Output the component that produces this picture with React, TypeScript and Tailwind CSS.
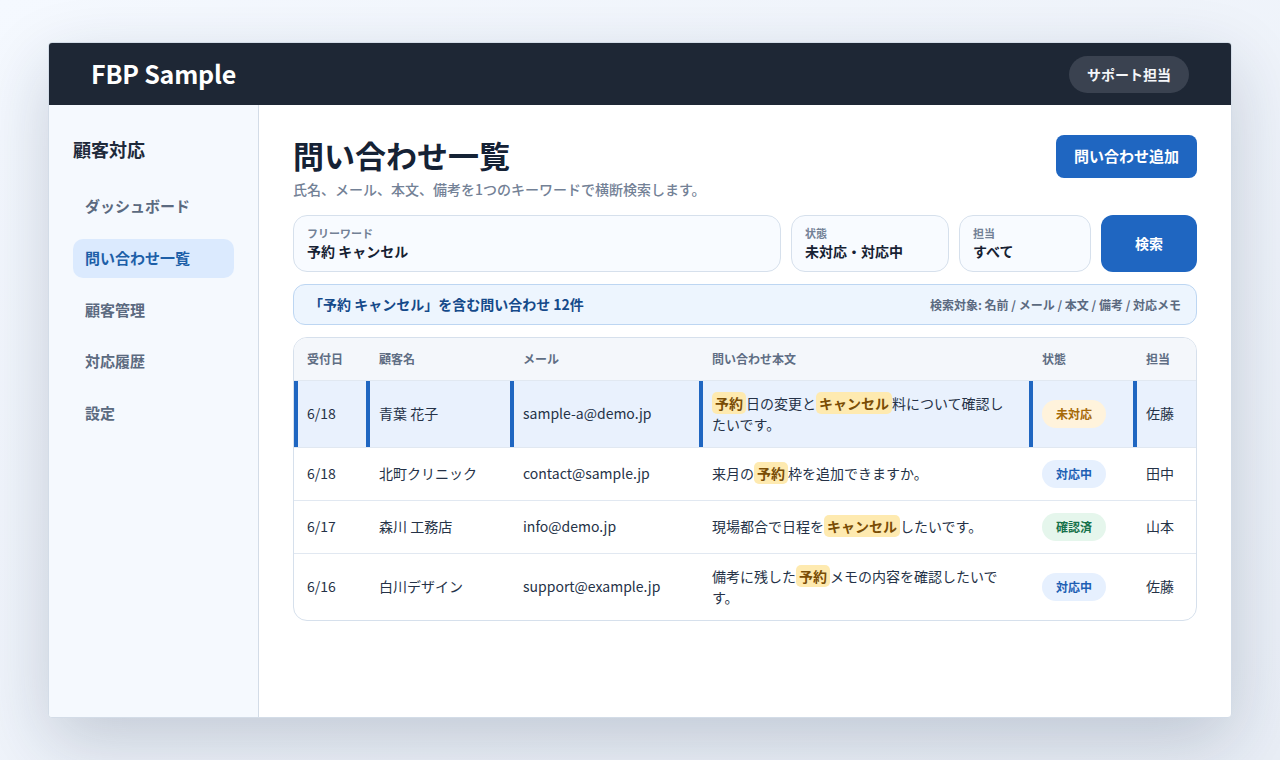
const rows = [
  {
    date: '6/18',
    name: '青葉 花子',
    mail: 'sample-a@demo.jp',
    body: [['予約'], '日の変更と', ['キャンセル'], '料について確認したいです。'],
    status: '未対応',
    owner: '佐藤',
    selected: true,
  },
  {
    date: '6/18',
    name: '北町クリニック',
    mail: 'contact@sample.jp',
    body: ['来月の', ['予約'], '枠を追加できますか。'],
    status: '対応中',
    owner: '田中',
  },
  {
    date: '6/17',
    name: '森川 工務店',
    mail: 'info@demo.jp',
    body: ['現場都合で日程を', ['キャンセル'], 'したいです。'],
    status: '確認済',
    owner: '山本',
  },
  {
    date: '6/16',
    name: '白川デザイン',
    mail: 'support@example.jp',
    body: ['備考に残した', ['予約'], 'メモの内容を確認したいです。'],
    status: '対応中',
    owner: '佐藤',
  },
];

const statusStyles: Record<string, string> = {
  未対応: 'bg-[#fff3dc] text-[#a76a08]',
  対応中: 'bg-[#e6f0fe] text-[#1d5fb4]',
  確認済: 'bg-[#e5f6ec] text-[#16714a]',
};

const navItems = ['ダッシュボード', '問い合わせ一覧', '顧客管理', '対応履歴', '設定'];

const Field = ({ label, value, className }: { label: string; value: string; className: string }) => (
  <div className={`h-[57px] rounded-[14px] border border-[#d6e0ec] bg-[#f8fbff] px-[13px] pt-[9px] ${className}`}>
    <div className="text-[11px] font-bold leading-[16px] text-[#738196]">{label}</div>
    <div className="text-[14px] font-bold leading-[20px] text-[#172233]">{value}</div>
  </div>
);

const Cell = ({ selected, children }: { selected?: boolean; children: React.ReactNode }) => (
  <td className={`px-[13px] py-[12px] align-middle text-[14px] leading-[21px] text-[#253247] ${selected ? 'shadow-[inset_4px_0_0_#1f66c1]' : ''}`}>
    {children}
  </td>
);

export default function App() {
  return (
    <div className="h-[760px] w-[1280px] overflow-hidden bg-gradient-to-br from-[#f5f9ff] to-[#e9eef6] px-[48px] pt-[42px] font-['Noto_Sans_CJK_JP','Noto_Sans',sans-serif]">
      <div className="flex h-[676px] flex-col overflow-hidden rounded-[4px] border border-[#d3dce7] bg-white shadow-[0_24px_70px_rgba(20,40,70,0.2)]">
        <header className="flex h-[62px] shrink-0 items-center justify-between bg-[#1e2735] px-[42px]">
          <div className="text-[25px] font-bold tracking-[-0.2px] text-white">FBP Sample</div>
          <div className="flex h-[37px] items-center rounded-full bg-[#3a4250] px-[18px] text-[14px] font-bold text-[#f4f6f9]">サポート担当</div>
        </header>
        <div className="flex min-h-0 flex-1">
          <aside className="w-[210px] shrink-0 border-r border-[#d3dce7] bg-[#f5f9fe] px-[24px] pt-[31px]">
            <div className="text-[18px] font-bold leading-[26px] text-[#1e2a3b]">顧客対応</div>
            <nav className="mt-[25px] flex flex-col gap-[13px]">
              {navItems.map(item => (
                <div
                  key={item}
                  className={`flex h-[38.75px] items-center rounded-[10px] px-[12px] text-[15px] font-bold ${item === '問い合わせ一覧' ? 'bg-[#dbeafe] text-[#1d5fa8]' : 'text-[#5b6a80]'}`}
                >
                  {item}
                </div>
              ))}
            </nav>
          </aside>
          <main className="flex-1 px-[34px] pt-[30px]">
            <div className="flex items-start justify-between">
              <div>
                <h1 className="text-[31px] font-bold leading-[40px] text-[#152235]">問い合わせ一覧</h1>
                <p className="mt-[4px] text-[14px] font-medium leading-[20px] text-[#738196]">氏名、メール、本文、備考を1つのキーワードで横断検索します。</p>
              </div>
              <button className="h-[43px] w-[141px] rounded-[8px] bg-[#1f66c1] text-[15px] font-bold text-white">問い合わせ追加</button>
            </div>
            <div className="mt-[16px] flex gap-[10px]">
              <Field label="フリーワード" value="予約 キャンセル" className="flex-1" />
              <Field label="状態" value="未対応・対応中" className="w-[158px]" />
              <Field label="担当" value="すべて" className="w-[132px]" />
              <button className="h-[57px] w-[96px] rounded-[12px] bg-[#1f66c1] text-[14px] font-bold text-white">検索</button>
            </div>
            <div className="mt-[12px] flex h-[41px] items-center justify-between rounded-[12px] border border-[#bdd6f2] bg-[#edf5fe] pl-[15px] pr-[15px]">
              <div className="text-[14px] font-bold text-[#154a8a]">「予約 キャンセル」を含む問い合わせ 12件</div>
              <div className="text-[12px] font-bold text-[#5b6a80]">検索対象: 名前 / メール / 本文 / 備考 / 対応メモ</div>
            </div>
            <div className="mt-[12px] overflow-hidden rounded-[14px] border border-[#d6e0ec]">
              <table className="w-full table-fixed border-collapse">
                <colgroup>
                  <col className="w-[72px]" />
                  <col className="w-[144px]" />
                  <col className="w-[189px]" />
                  <col className="w-[330px]" />
                  <col className="w-[104px]" />
                  <col className="w-[63px]" />
                </colgroup>
                <thead>
                  <tr className="h-[42px] border-b border-[#e1e8f1] bg-[#f4f7fb] text-left text-[12px] font-bold text-[#5f6e84]">
                    {['受付日', '顧客名', 'メール', '問い合わせ本文', '状態', '担当'].map(h => (
                      <th key={h} className="px-[13px] font-bold">{h}</th>
                    ))}
                  </tr>
                </thead>
                <tbody>
                  {rows.map((r, i) => (
                    <tr key={i} className={`${i < rows.length - 1 ? 'border-b border-[#e1e8f1]' : ''} ${r.selected ? 'bg-[#e9f1fd]' : ''}`}>
                      <Cell selected={r.selected}>{r.date}</Cell>
                      <Cell selected={r.selected}>{r.name}</Cell>
                      <Cell selected={r.selected}>{r.mail}</Cell>
                      <Cell selected={r.selected}>
                        {r.body.map((part, j) =>
                          typeof part === 'string' ? (
                            <span key={j}>{part}</span>
                          ) : (
                            <mark key={j} className="rounded-[5px] bg-[#feeab0] px-[3px] py-[1px] font-bold text-[#7a4d05]">{part[0]}</mark>
                          )
                        )}
                      </Cell>
                      <Cell selected={r.selected}>
                        <span className={`flex h-[28px] w-[64px] items-center justify-center rounded-full text-[12px] font-bold ${statusStyles[r.status]}`}>{r.status}</span>
                      </Cell>
                      <Cell selected={r.selected}>{r.owner}</Cell>
                    </tr>
                  ))}
                </tbody>
              </table>
            </div>
          </main>
        </div>
      </div>
    </div>
  );
}
